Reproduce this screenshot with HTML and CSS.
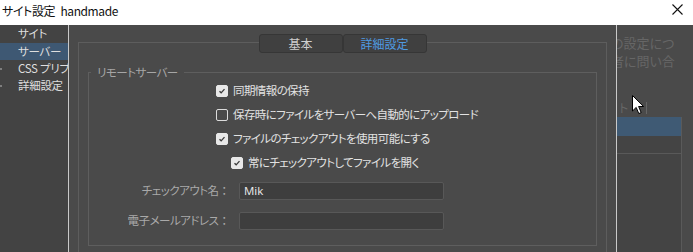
FILE: index.html
```html
<!DOCTYPE html>
<html lang="ja">
<head>
<meta charset="utf-8">
<title>サイト設定 handmade</title>
<link rel="stylesheet" href="styles.css">
</head>
<body>
<div class="titlebar">
  <span class="title">サイト設定 handmade</span>
  <svg class="close" width="11" height="11" viewBox="0 0 11 11"><path d="M0.5 0.5 L10.5 10.5 M10.5 0.5 L0.5 10.5" stroke="#111" stroke-width="1.1" fill="none"/></svg>
</div>
<div class="window">
  <nav class="sidebar">
    <div class="nav-item"><span class="dot none"></span>サイト</div>
    <div class="nav-item selected"><span class="dot none"></span>サーバー</div>
    <div class="nav-item"><span class="dot"></span>CSS プリプ</div>
    <div class="nav-item"><span class="dot"></span>詳細設定</div>
  </nav>
  <main class="main">
    <section class="panel">
      <div class="tabs">
        <div class="tab">基本</div>
        <div class="tab active">詳細設定</div>
      </div>
      <fieldset class="group">
        <legend>リモートサーバー</legend>
        <div class="check-row"><span class="box checked"><svg width="12" height="12" viewBox="0 0 12 12"><path d="M3 6.2 L5 8.2 L9 3.8" stroke="#3a3a3a" stroke-width="1.6" fill="none"/></svg></span>同期情報の保持</div>
        <div class="check-row"><span class="box"></span>保存時にファイルをサーバーへ自動的にアップロード</div>
        <div class="check-row"><span class="box checked"><svg width="12" height="12" viewBox="0 0 12 12"><path d="M3 6.2 L5 8.2 L9 3.8" stroke="#3a3a3a" stroke-width="1.6" fill="none"/></svg></span>ファイルのチェックアウトを使用可能にする</div>
        <div class="check-row sub"><span class="box checked"><svg width="12" height="12" viewBox="0 0 12 12"><path d="M3 6.2 L5 8.2 L9 3.8" stroke="#3a3a3a" stroke-width="1.6" fill="none"/></svg></span>常にチェックアウトしてファイルを開く</div>
        <div class="fields">
          <label class="field-label">チェックアウト名<span class="colon">：</span></label>
          <div class="input">Mik</div>
          <label class="field-label">電子メールアドレス<span class="colon">：</span></label>
          <div class="input"></div>
        </div>
      </fieldset>
    </section>
  </main>
  <aside class="right">
    <p class="faded">の設定につ<br>者に問い合</p>
    <div class="list-head"><span class="faded-small">ト</span><span class="head-bar"></span></div>
    <div class="list">
      <div class="list-row selected"></div>
      <div class="list-row"></div>
    </div>
    <svg class="cursor" width="13" height="20" viewBox="0 0 13 20"><path d="M0.5 0.5 L0.5 16 L4.2 12.4 L6.8 18.6 L9.2 17.6 L6.6 11.5 L11.6 11.5 Z" fill="#fff" stroke="#000" stroke-width="1"/></svg>
  </aside>
</div>
</body>
</html>
```

FILE: styles.css
```css
* { box-sizing: border-box; }
html, body { margin: 0; padding: 0; }
body {
  width: 693px;
  height: 252px;
  overflow: hidden;
  font-family: "Noto Sans CJK JP", "Noto Sans", sans-serif;
  font-feature-settings: "palt";
  background: #4a4a4a;
}
.titlebar {
  height: 25px;
  background: #fff;
  display: flex;
  align-items: center;
  padding-left: 2px;
}
.title {
  font-size: 12px;
  letter-spacing: -0.4px;
  word-spacing: 3px;
  color: #111;
  line-height: 1;
  margin-top: -4px;
}
.close {
  margin-left: auto;
  margin-right: 10px;
  margin-top: -6px;
}
.window {
  display: flex;
  height: 227px;
  overflow: hidden;
  background: #4a4a4a;
}
.sidebar {
  width: 69px;
  flex: none;
  background: #434343;
  border-right: 1px solid #c9c9c9;
  overflow: hidden;
}
.nav-item {
  height: 17px;
  display: flex;
  align-items: center;
  white-space: nowrap;
  font-size: 11.5px;
  letter-spacing: -0.3px;
  color: #dedede;
  line-height: 1;
}
.nav-item.selected { background: #3e5873; }
.nav-item:first-child { height: 18px; }
.dot {
  width: 2px;
  height: 2px;
  background: #7e7e7e;
  margin-right: 16px;
  flex: none;
}
.dot.none { background: transparent; }
.main {
  width: 547px;
  flex: none;
  padding: 17px 9px 0 9px;
}
.panel {
  border: 1px solid #5d5d5d;
  border-bottom: none;
  height: 210px;
  padding: 0 9px 0 9px;
}
.tabs {
  display: flex;
  justify-content: center;
  margin-top: -9px;
}
.tab {
  width: 84px;
  height: 19px;
  background: #404040;
  border: 1px solid #363636;
  border-radius: 3px;
  font-size: 12px;
  color: #cfcfcf;
  display: flex;
  align-items: center;
  justify-content: center;
  line-height: 1;
}
.tab.active { color: #4f9be2; }
.group {
  margin: 11px 0 0 0;
  border: 1px solid #5e5e5e;
  padding: 0 0 15px 0;
  min-width: 0;
}
.group legend {
  margin-left: 2px;
  padding: 0 6px;
  font-size: 11.5px;
  letter-spacing: -0.5px;
  color: #a6a6a6;
  line-height: 16px;
}
.check-row {
  height: 24px;
  display: flex;
  align-items: center;
  padding-left: 127px;
  font-size: 11.5px;
  letter-spacing: -0.6px;
  color: #e2e2e2;
  line-height: 1;
}
.check-row:first-of-type { margin-top: -1px; }
.check-row.sub { padding-left: 142px; }
.box {
  width: 12px;
  height: 12px;
  border: 1px solid #dcdcdc;
  border-radius: 2px;
  margin-right: 5px;
  flex: none;
  display: flex;
  align-items: center;
  justify-content: center;
}
.box.checked {
  background: #e8e8e8;
  border-color: #e8e8e8;
}
.box svg { display: block; }
.fields {
  display: grid;
  grid-template-columns: 141px 205px;
  column-gap: 9px;
  row-gap: 12px;
  margin-top: 7px;
  align-items: center;
}
.field-label {
  text-align: right;
  font-size: 11.5px;
  letter-spacing: -0.5px;
  color: #a9a9a9;
  line-height: 1;
  white-space: nowrap;
}
.colon {
  font-feature-settings: normal;
  letter-spacing: 0;
}
.input {
  height: 18px;
  background: #3e3e3e;
  border: 1px solid #585858;
  border-radius: 2px;
  font-size: 11.5px;
  color: #ececec;
  padding-left: 4px;
  display: flex;
  align-items: center;
  line-height: 1;
  font-family: "Open Sans", "Noto Sans", sans-serif;
}
.right {
  flex: 1;
  border-left: 1px solid #c9c9c9;
  position: relative;
  overflow: hidden;
}
.faded {
  margin: 9px 0 0 -6px;
  font-size: 13px;
  line-height: 18px;
  color: #666;
  white-space: nowrap;
}
.list-head {
  margin-top: 30px;
  height: 15px;
  display: flex;
  align-items: center;
}
.faded-small {
  font-size: 12px;
  color: #666;
  margin-left: 2px;
  line-height: 1;
}
.head-bar {
  width: 1px;
  height: 12px;
  background: #666;
  margin-left: 18px;
}
.list {
  margin-top: 2px;
  width: 65px;
  height: 200px;
  border-right: 1px solid #5a5a5a;
  background: #444;
}
.list-row { height: 19px; }
.list-row.selected { background: #3f5a74; }
.list-row + .list-row {
  height: 18px;
  border-bottom: 1px solid #595959;
}
.cursor {
  position: absolute;
  left: 15px;
  top: 70px;
}
```
